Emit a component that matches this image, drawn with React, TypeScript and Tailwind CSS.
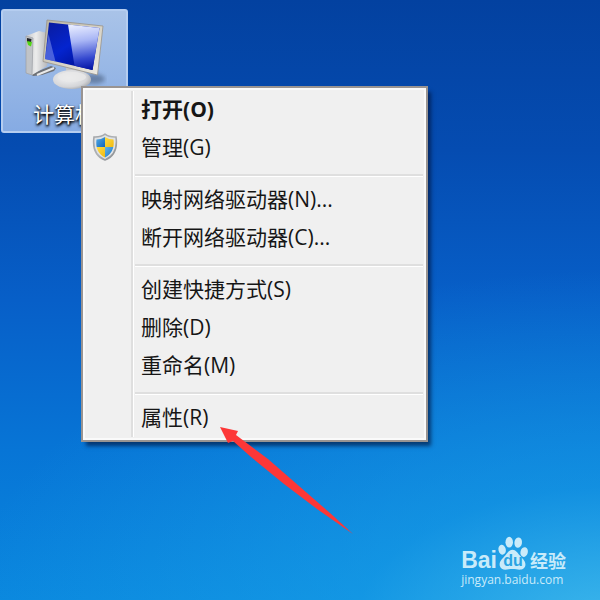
import React from "react";

type MenuEntry = {
  label: string;
  accessKey: string;
  more?: boolean;
  strong?: boolean;
  shield?: boolean;
};

const groups: MenuEntry[][] = [
  [
    { label: "打开", accessKey: "O", strong: true },
    { label: "管理", accessKey: "G", shield: true },
  ],
  [
    { label: "映射网络驱动器", accessKey: "N", more: true },
    { label: "断开网络驱动器", accessKey: "C", more: true },
  ],
  [
    { label: "创建快捷方式", accessKey: "S" },
    { label: "删除", accessKey: "D" },
    { label: "重命名", accessKey: "M" },
  ],
  [{ label: "属性", accessKey: "R" }],
];

function ComputerIcon() {
  return (
    <svg width="84" height="74" viewBox="22 18 84 74" aria-hidden="true">
      <defs>
        <linearGradient id="tower" x1="0" x2="1">
          <stop offset="0" stopColor="#c4c6c9" />
          <stop offset="0.4" stopColor="#ececec" />
          <stop offset="1" stopColor="#a4a6aa" />
        </linearGradient>
        <linearGradient id="screen" x1="0" y1="0" x2="0.8" y2="1">
          <stop offset="0" stopColor="#0a1b9c" />
          <stop offset="0.5" stopColor="#0424cf" />
          <stop offset="1" stopColor="#000c86" />
        </linearGradient>
        <linearGradient id="glare" x1="0.45" y1="0" x2="0.55" y2="1">
          <stop offset="0" stopColor="#e6ebff" />
          <stop offset="0.35" stopColor="#a9b6f5" />
          <stop offset="0.75" stopColor="#3448cf" />
          <stop offset="1" stopColor="#0515a4" />
        </linearGradient>
        <linearGradient id="bezel" x1="0" y1="0" x2="1" y2="1">
          <stop offset="0" stopColor="#b9b4a2" />
          <stop offset="1" stopColor="#efece4" />
        </linearGradient>
        <radialGradient id="foot" cx="0.4" cy="0.4" r="0.7">
          <stop offset="0" stopColor="#f5f5f5" />
          <stop offset="0.7" stopColor="#d4d5d8" />
          <stop offset="1" stopColor="#9da0a5" />
        </radialGradient>
        <filter id="soft" x="-50%" y="-50%" width="200%" height="200%">
          <feGaussianBlur stdDeviation="2" />
        </filter>
      </defs>
      <ellipse cx="93" cy="79" rx="11" ry="5" fill="#4f6585" opacity="0.65" filter="url(#soft)" />
      <path d="M30 74 L50 66 L55 68 L53 71 L41 75 L32 76 Z" fill="#6d7076" />
      <path d="M36 75 L53 68" stroke="#e9e9e9" strokeWidth="2" />
      <path d="M25 36 L38 31 L50 34 L46 66 L31 75 L25 73 Z" fill="url(#tower)" />
      <path d="M25 36 L32 38 L31 75 L25 73 Z" fill="#c0c3c7" stroke="#9b9ea3" strokeWidth="0.7" />
      <path d="M26 38 L30.500 39 L30 43 L26 42 Z" fill="#22262b" />
      <path d="M26 41 L31 42 L30 46.500 L27 45 Z" fill="#52d615" />
      <path d="M65 66 L83 70 L82 79 L65 79 Z" fill="#c4c6c9" />
      <ellipse cx="71" cy="79.500" rx="19" ry="9.500" fill="url(#foot)" />
      <ellipse cx="71" cy="77" rx="14" ry="5" fill="#e8e8e9" opacity="0.8" />
      <path d="M46 20 L102 26 L96.500 75 L42 61.500 Z" fill="url(#bezel)" stroke="#98938a" strokeWidth="0.8" />
      <path d="M48 22.500 L98.500 28 L91.500 70 L44 59 Z" fill="url(#screen)" />
      <path d="M67 24.600 L98.500 28 L91.500 70 L73.500 65.800 Z" fill="url(#glare)" />
      <path d="M47.500 34 L54.500 61.400 L44 59 Z" fill="#7489e7" opacity="0.6" />
    </svg>
  );
}

function ShieldIcon() {
  return (
    <svg width="26" height="28" viewBox="0 0 26 28" aria-hidden="true">
      <defs>
        <linearGradient id="rim" x1="0" y1="0" x2="1" y2="1">
          <stop offset="0" stopColor="#a2a5a8" />
          <stop offset="0.5" stopColor="#aeb1b4" />
          <stop offset="1" stopColor="#85888b" />
        </linearGradient>
        <linearGradient id="azure" x1="0" y1="0" x2="1" y2="1">
          <stop offset="0" stopColor="#5fb4ea" />
          <stop offset="1" stopColor="#0f67bd" />
        </linearGradient>
        <linearGradient id="gold" x1="0" y1="0" x2="1" y2="1">
          <stop offset="0" stopColor="#ffe04d" />
          <stop offset="1" stopColor="#efb70c" />
        </linearGradient>
        <clipPath id="field">
          <path d="M13 4 Q17 6.500 21.500 6.500 C22.500 14 20.500 20.500 13 24.500 C5.500 20.500 3.500 14 4.500 6.500 Q9 6.500 13 4 Z" />
        </clipPath>
      </defs>
      <path
        d="M13 1.200 C16 3.500 20 4.200 24 4 C25.500 15 22 23.500 13 27 C4 23.500 0.500 15 2 4 C6 4.200 10 3.500 13 1.200 Z"
        fill="#dfe2e5"
        stroke="url(#rim)"
        strokeWidth="1.6"
      />
      <g clipPath="url(#field)">
        <path d="M3 3 H13 V14 H3 Z" fill="url(#azure)" />
        <path d="M13 3 H23 V14 H13 Z" fill="url(#gold)" />
        <path d="M3 14 H13 V26 H3 Z" fill="url(#gold)" />
        <path d="M13 14 H23 V26 H13 Z" fill="url(#azure)" />
      </g>
    </svg>
  );
}

function MenuRow({ entry }: { entry: MenuEntry }) {
  return (
    <button
      type="button"
      role="menuitem"
      className="flex h-[38px] w-full items-center pb-0.5 text-left hover:bg-black/5"
    >
      <span className="flex w-[46px] shrink-0 justify-center pr-2">
        {entry.shield && <ShieldIcon />}
      </span>
      <span className={entry.strong ? "pl-[9px] font-bold" : "pl-[9px]"}>
        {entry.label}({entry.accessKey}){entry.more && "..."}
      </span>
    </button>
  );
}

function ContextMenu() {
  return (
    <div
      role="menu"
      className="absolute top-[86px] left-[81px] w-[347px] border-2 border-[#999492] bg-[#f0f0f0] p-[3px] text-[21px] leading-[36px] text-[#161616] shadow-[inset_0_0_0_2px_#fafafa,4px_5px_4px_-1px_rgba(0,20,60,0.65)]"
    >
      <div className="bg-[linear-gradient(90deg,transparent_45px,#dfdfdf_45px,#dfdfdf_47px,#ffffff_47px,#ffffff_48px,transparent_48px)]">
        {groups.map((group, index) => (
          <div key={index} role="group">
            {index > 0 && (
              <div
                role="separator"
                className="ml-[49px] flex h-[14px] flex-col justify-end pb-[4px]"
              >
                <div className="h-[3px] border-t-2 border-b border-t-[#dfdfdf] border-b-white" />
              </div>
            )}
            {group.map((entry) => (
              <MenuRow key={entry.accessKey} entry={entry} />
            ))}
          </div>
        ))}
      </div>
    </div>
  );
}

function Pointer() {
  return (
    <svg
      className="pointer-events-none absolute top-[426px] left-[219px]"
      width="134"
      height="108"
      viewBox="219 426 134 108"
      aria-hidden="true"
    >
      <path
        d="M220 427 L238 431 L236 435 L268 459 L299 486 L330 513 L353 534 L317 509 L284 484 L251 457 L233 441 L228 443 Z"
        fill="#fd3737"
      />
    </svg>
  );
}

function Watermark() {
  return (
    <div className="absolute right-[34px] bottom-[14px] text-[#c9ebfa]">
      <div className="flex h-[38px] items-end">
        <span className="font-['Liberation_Sans',sans-serif] text-[23px] leading-[28px] font-bold">
          Bai
        </span>
        <span className="relative flex w-[32px] shrink-0 justify-center pb-1">
          <svg width="32" height="34" viewBox="0 0 32 36" fill="currentColor" aria-hidden="true">
            <ellipse cx="4.500" cy="14.500" rx="3.900" ry="5.300" transform="rotate(-12 4.500 14.500)" />
            <ellipse cx="12" cy="6.500" rx="4" ry="5.600" />
            <ellipse cx="21.500" cy="7" rx="4" ry="5.500" transform="rotate(8 21.500 7)" />
            <ellipse cx="27.800" cy="17" rx="3.900" ry="5.200" transform="rotate(14 27.800 17)" />
            <path d="M15.500 14.500 C19 14.500 21 18 23 20.500 C26 24 30 27 29 31.500 C28 36 23 36 19.500 35.200 C17 34.700 14 34.700 11.500 35.200 C7.500 36 3 36 2 31.500 C1 27 5 24 8 20.500 C10.500 17.500 12 14.500 15.500 14.500 Z" />
          </svg>
          <span className="absolute bottom-[3px] font-['Liberation_Sans',sans-serif] text-[16px] leading-[20px] font-bold text-[#2aa4e3]">
            du
          </span>
        </span>
        <span className="pl-px font-['Noto_Sans_CJK_SC',sans-serif] text-[18px] leading-[28px] font-bold">
          经验
        </span>
      </div>
      <div className="font-['Open_Sans','Noto_Sans',sans-serif] text-[12px] leading-[12px] font-medium">
        jingyan.baidu.com
      </div>
    </div>
  );
}

export default function App() {
  return (
    <main className="relative min-h-screen w-full overflow-hidden bg-[radial-gradient(ellipse_110%_60%_at_103%_105%,rgba(80,200,240,0.75)_0%,rgba(30,170,235,0.45)_40%,transparent_100%),linear-gradient(180deg,#0341a0_0%,#054cb1_25%,#075fc8_50%,#0775d6_75%,#0a87de_100%)] font-['Open_Sans','Noto_Sans_CJK_SC',sans-serif]">
      <button
        type="button"
        className="absolute top-[9px] left-px flex h-[124px] w-[127px] flex-col items-center rounded-[3px] border-2 border-[#b5cdf0] bg-linear-to-b from-[#a9c3e8] to-[#86abe3] pt-[7px]"
      >
        <ComputerIcon />
        <span className="mt-2 text-[21px] leading-[28px] text-white [text-shadow:1px_1px_2px_#000,0_2px_3px_#000]">
          计算机
        </span>
      </button>
      <ContextMenu />
      <Pointer />
      <Watermark />
    </main>
  );
}
